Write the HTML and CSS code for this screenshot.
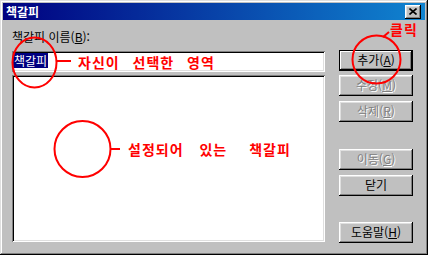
FILE: index.html
```html
<!DOCTYPE html>
<html lang="ko">
<head>
<meta charset="utf-8">
<title>책갈피</title>
<link rel="stylesheet" href="styles.css">
</head>
<body>
<div class="window">
  <div class="titlebar">
    <span class="title">책갈피</span>
    <div class="close">
      <svg width="8" height="7" viewBox="0 0 8 7"><path d="M0.5 0.5 L7.5 6.5 M7.5 0.5 L0.5 6.5" stroke="#000" stroke-width="1.6" fill="none"/></svg>
    </div>
  </div>
  <div class="content">
    <div class="left">
      <div class="label">책갈피 이름(<u>B</u>):</div>
      <div class="field edit"><span class="sel">책갈피</span></div>
      <div class="field list"></div>
    </div>
    <div class="buttons">
      <div class="btn default">추가(<u>A</u>)</div>
      <div class="btn disabled g4">수정(<u>M</u>)</div>
      <div class="btn disabled g5">삭제(<u>R</u>)</div>
      <div class="btn disabled g27">이동(<u>G</u>)</div>
      <div class="btn g5">닫기</div>
      <div class="btn g26">도움말(<u>H</u>)</div>
    </div>
  </div>
  <div class="annot">
    <svg class="marks" width="428" height="255" viewBox="0 0 428 255">
      <g stroke="#ff0000" stroke-width="2" fill="none">
        <ellipse cx="34.5" cy="62.5" rx="22" ry="25"/>
        <line x1="56" y1="61" x2="71" y2="61"/>
        <circle cx="82.5" cy="149" r="28"/>
        <line x1="111" y1="149" x2="120" y2="149"/>
        <circle cx="376.5" cy="59.5" r="24"/>
        <line x1="383" y1="37" x2="389" y2="32"/>
      </g>
    </svg>
    <span class="note n1">자신이 선택한 영역</span>
    <span class="note n2">설정되어 있는 <span class="push">책갈피</span></span>
    <span class="note n3">클릭</span>
  </div>
</div>
</body>
</html>
```
FILE: styles.css
```css
html, body {
  margin: 0;
  padding: 0;
  background: #c0c0c0;
}
body {
  font-family: "Liberation Sans", "Noto Sans CJK KR", sans-serif;
  font-size: 12px;
}
.window {
  position: relative;
  width: 428px;
  height: 255px;
  box-sizing: border-box;
  padding: 3px;
  background: #c0c0c0;
  box-shadow: inset -1px -1px #000, inset 1px 1px #dfdfdf, inset -2px -2px #808080, inset 2px 2px #fff;
  display: flex;
  flex-direction: column;
}
.titlebar {
  height: 18px;
  background: linear-gradient(to right, #000080, #1084d0);
  display: flex;
  align-items: center;
  justify-content: space-between;
  padding: 0 4px 0 3px;
}
.title {
  color: #fff;
  font-weight: bold;
  font-size: 12px;
  line-height: 14px;
  font-family: "Noto Sans CJK KR", sans-serif;
}
.close {
  width: 16px;
  height: 14px;
  box-sizing: border-box;
  background: #c0c0c0;
  box-shadow: inset -1px -1px #000, inset 1px 1px #fff, inset -2px -2px #808080, inset 2px 2px #dfdfdf;
  display: flex;
  align-items: center;
  justify-content: center;
  padding: 0 1px 1px 0;
}
.close svg { display: block; }
.content {
  flex: 1;
  display: flex;
  gap: 14px;
  padding: 9px 12px 9px 9px;
}
.left {
  flex: 1;
  display: flex;
  flex-direction: column;
}
.label {
  line-height: 15px;
  height: 15px;
  color: #000;
  font-family: "Noto Sans CJK KR", sans-serif;
}
.field {
  background: #fff;
  box-sizing: border-box;
  box-shadow: inset 1px 1px #808080, inset -1px -1px #fff, inset 2px 2px #000, inset -2px -2px #dfdfdf;
}
.edit {
  margin-top: 7px;
  height: 21px;
  padding: 2px 2px 2px 1px;
}
.sel {
  display: inline-block;
  background: #000080;
  color: #fff;
  line-height: 15px;
  height: 15px;
  padding: 0 1px;
  font-family: "Noto Sans CJK KR", sans-serif;
}
.list {
  margin-top: 3px;
  height: 167px;
}
.buttons {
  width: 74px;
  padding-top: 21px;
  display: flex;
  flex-direction: column;
}
.btn {
  height: 21px;
  box-sizing: border-box;
  background: #c0c0c0;
  box-shadow: inset -1px -1px #000, inset 1px 1px #fff, inset -2px -2px #808080, inset 2px 2px #dfdfdf;
  display: flex;
  align-items: center;
  justify-content: center;
  line-height: 14px;
  color: #000;
  font-family: "Noto Sans CJK KR", sans-serif;
  padding-bottom: 1px;
}
.btn.default {
  border: 1px solid #000;
  box-shadow: inset -1px -1px #000, inset 1px 1px #fff, inset -2px -2px #808080;
}
.btn.disabled {
  color: #808080;
  text-shadow: 1px 1px 0 #fff;
}
.g4 { margin-top: 4px; }
.g5 { margin-top: 5px; }
.g27 { margin-top: 27px; }
.g26 { margin-top: 26px; }
.annot {
  position: absolute;
  left: 0;
  top: 0;
  width: 428px;
  height: 255px;
  pointer-events: none;
}
.marks {
  position: absolute;
  left: 0;
  top: 0;
}
.note {
  position: absolute;
  color: #ff0000;
  font-weight: bold;
  font-size: 14px;
  line-height: 14px;
  letter-spacing: 1px;
  word-spacing: 8px;
  font-family: "Noto Sans CJK KR", sans-serif;
  white-space: nowrap;
}
.n1 { left: 78px; top: 55px; }
.n2 { left: 128px; top: 142px; word-spacing: 11px; }
.push { margin-left: 6px; }
.n3 { left: 390px; top: 22px; }
```
